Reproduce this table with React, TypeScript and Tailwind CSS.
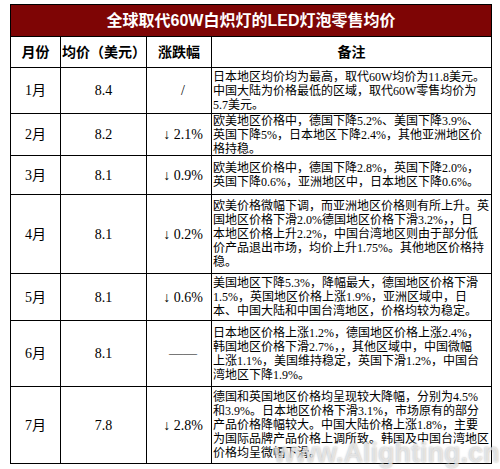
import React from "react";

type Row = { m: string; p: string; c: string; h: number; lines: string[] };

const rows: Row[] = [
  {
    m: "1月",
    p: "8.4",
    c: "/",
    h: 46,
    lines: [
      "日本地区均价均为最高，取代60W均价为11.8美元。",
      "中国大陆为价格最低的区域，取代60W零售均价为",
      "5.7美元。",
    ],
  },
  {
    m: "2月",
    p: "8.2",
    c: "↓ 2.1%",
    h: 42,
    lines: [
      "欧美地区价格中，德国下降5.2%、美国下降3.9%、",
      "英国下降5%，日本地区下降2.4%，其他亚洲地区价",
      "格持稳。",
    ],
  },
  {
    m: "3月",
    p: "8.1",
    c: "↓ 0.9%",
    h: 39,
    lines: [
      "欧美地区价格中，德国下降2.8%，英国下降2.0%，",
      "英国下降0.6%，亚洲地区中，日本地区下降0.6%。",
    ],
  },
  {
    m: "4月",
    p: "8.1",
    c: "↓ 0.2%",
    h: 79,
    lines: [
      "欧美价格微幅下调，而亚洲地区价格则有所上升。英",
      "国地区价格下滑2.0%德国地区价格下滑3.2%，，日",
      "本地区价格上升2.2%，中国台湾地区则由于部分低",
      "价产品退出市场，均价上升1.75%。其他地区价格持",
      "稳。",
    ],
  },
  {
    m: "5月",
    p: "8.1",
    c: "↓ 0.6%",
    h: 47,
    lines: [
      "美国地区下降5.3%，降幅最大，德国地区价格下滑",
      "1.5%，英国地区价格上涨1.9%，亚洲区域中，日",
      "本、中国大陆和中国台湾地区，价格均较为稳定。",
    ],
  },
  {
    m: "6月",
    p: "8.1",
    c: "——",
    h: 66,
    lines: [
      "日本地区价格上涨1.2%，德国地区价格上涨2.4%，",
      "韩国地区价格下滑2.7%，，其他区域中，中国微幅",
      "上涨1.1%，美国维持稳定，英国下滑1.2%，中国台",
      "湾地区下降1.9%。",
    ],
  },
  {
    m: "7月",
    p: "7.8",
    c: "↓ 2.8%",
    h: 77,
    lines: [
      "德国和英国地区价格均呈现较大降幅，分别为4.5%",
      "和3.9%。日本地区价格下滑3.1%，市场原有的部分",
      "产品价格降幅较大。中国大陆价格上涨1.8%，主要",
      "为国际品牌产品价格上调所致。韩国及中国台湾地区",
      "价格均呈微幅下滑。",
    ],
  },
];

const serif = "font-['Liberation_Serif','Noto_Sans_CJK_SC',serif]";

export default function App() {
  return (
    <div className={`relative w-[500px] h-[469px] bg-white pt-[4px] pl-[10px] overflow-hidden ${serif} text-black`}>
      <div className="grid w-[482px] grid-cols-[50px_86px_65px_280px] border-l border-t border-black">
        <div className="col-span-4 h-[32px] bg-[#7e0505] border-r border-b border-black flex items-center justify-center text-white text-[16px] font-bold font-['Liberation_Sans','Noto_Sans_CJK_SC',sans-serif]">
          全球取代60W白炽灯的LED灯泡零售均价
        </div>
        <div className="h-[31px] border-r border-b border-black flex items-center justify-center text-[14px] font-bold">月份</div>
        <div className="h-[31px] border-r border-b border-black flex items-center pl-[1px] text-[14px] font-bold whitespace-nowrap">均价（美元）</div>
        <div className="h-[31px] border-r border-b border-black flex items-center justify-center text-[14px] font-bold">涨跌幅</div>
        <div className="h-[31px] border-r border-b border-black flex items-center justify-center text-[14px] font-bold">备注</div>
        {rows.map((r) => (
          <React.Fragment key={r.m}>
            <div style={{ height: r.h }} className="border-r border-b border-black flex items-center justify-center text-[14px]">{r.m}</div>
            <div style={{ height: r.h }} className="border-r border-b border-black flex items-center justify-center text-[14px]">{r.p}</div>
            <div style={{ height: r.h }} className="border-r border-b border-black flex items-center justify-center pl-[8px] text-[14px] whitespace-nowrap">{r.c}</div>
            <div style={{ height: r.h }} className="border-r border-b border-black flex flex-col justify-center pl-[1px] text-[12px] leading-[14px] whitespace-nowrap overflow-hidden">
              {r.lines.map((l, i) => (
                <div key={i}>{l}</div>
              ))}
            </div>
          </React.Fragment>
        ))}
      </div>
      <div className="absolute left-[274px] top-[433px] text-[27px] font-bold text-white/60 font-['Liberation_Sans',sans-serif] [text-shadow:0_0_2px_rgba(140,140,140,0.7)] pointer-events-none">
        www.Alighting.cn
      </div>
    </div>
  );
}
